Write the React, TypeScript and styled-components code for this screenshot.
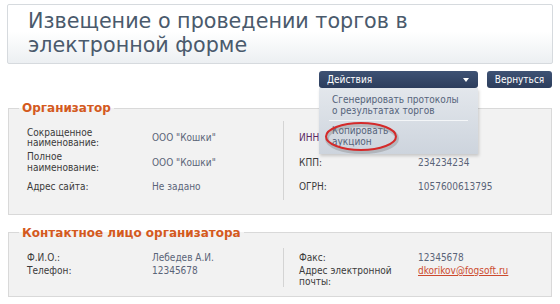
import React from "react";
import styled, {createGlobalStyle} from "styled-components";

const GlobalStyle = createGlobalStyle`
	html, body {
		margin: 0;
		padding: 0;
		background: #ffffff;
	}
	body {
		font-family: "DejaVu Sans Condensed", "DejaVu Sans", Verdana, sans-serif;
		font-size: 10px;
		color: #333333;
	}
`;

type Row = {label: string; value: string; labelColor?: string; link?: boolean};

const orgLeft: Row[] = [
	{label: "Сокращенное наименование:", value: 'ООО "Кошки"'},
	{label: "Полное наименование:", value: 'ООО "Кошки"'},
	{label: "Адрес сайта:", value: "Не задано"},
];

const orgRight: Row[] = [
	{label: "ИНН", value: "", labelColor: "#5b2a63"},
	{label: "КПП:", value: "234234234"},
	{label: "ОГРН:", value: "1057600613795"},
];

const contactLeft: Row[] = [
	{label: "Ф.И.О.:", value: "Лебедев А.И."},
	{label: "Телефон:", value: "12345678"},
];

const contactRight: Row[] = [
	{label: "Факс:", value: "12345678"},
	{label: "Адрес электронной почты:", value: "dkorikov@fogsoft.ru", link: true},
];

const InfoColumn = ({rows, tall, labelWidth, divided}: {rows: Row[]; tall?: boolean; labelWidth: number; divided?: boolean}) => (
	<Column $divided={divided} $tall={tall}>
		{rows.map((r) => (
			<InfoRow key={r.label} $tall={tall} $labelWidth={labelWidth}>
				<Label $color={r.labelColor}>{r.label}</Label>
				{r.link ? <Link href="#">{r.value}</Link> : <Value>{r.value}</Value>}
			</InfoRow>
		))}
	</Column>
);

export default function App() {
	return (
		<>
			<GlobalStyle/>
			<Page>
				<TitleBox>
					<Title>Извещение о проведении торгов в электронной форме</Title>
				</TitleBox>

				<Toolbar>
					<DropWrap>
						<DarkButton $wide>
							<span>Действия</span>
							<Caret/>
						</DarkButton>
						<Menu>
							<MenuItem $width={132}>Сгенерировать протоколы о результатах торгов</MenuItem>
							<MenuSeparator/>
							<MenuItem $width={66}>Копировать аукцион</MenuItem>
							<Highlight width="78" height="34" viewBox="0 0 78 34">
								<ellipse cx="38" cy="17.5" rx="35" ry="13.5" fill="none" stroke="#7c7c7c" strokeOpacity="0.35" strokeWidth="4"/>
								<ellipse cx="37" cy="15.5" rx="35" ry="13.5" fill="none" stroke="#d42a2a" strokeWidth="2"/>
							</Highlight>
						</Menu>
					</DropWrap>
					<DarkButton>Вернуться</DarkButton>
				</Toolbar>

				<Fieldset>
					<Legend>Организатор</Legend>
					<Columns>
						<InfoColumn rows={orgLeft} tall labelWidth={125}/>
						<InfoColumn rows={orgRight} tall labelWidth={119} divided/>
					</Columns>
				</Fieldset>

				<Fieldset $second>
					<Legend>Контактное лицо организатора</Legend>
					<Columns>
						<InfoColumn rows={contactLeft} labelWidth={125}/>
						<InfoColumn rows={contactRight} labelWidth={119} divided/>
					</Columns>
				</Fieldset>
			</Page>
		</>
	);
}

const Page = styled.div`
	width: 546px;
	padding: 4px 0 0 7px;
`;

const TitleBox = styled.div`
	box-sizing: border-box;
	height: 60px;
	border: 1px solid #d6dade;
	border-radius: 2px;
	background: linear-gradient(to bottom, #ffffff 0%, #ffffff 45%, #eceff2 100%);
	padding: 4px 0 0 20px;
`;

const Title = styled.h1`
	margin: 0;
	font-family: "DejaVu Sans", Verdana, sans-serif;
	font-weight: normal;
	font-size: 20.7px;
	line-height: 24px;
	color: #4a5a6c;
	width: 420px;
`;

const Toolbar = styled.div`
	display: flex;
	justify-content: flex-end;
	gap: 9px;
	margin-top: 7px;
	padding-right: 1px;
`;

const DropWrap = styled.div`
	position: relative;
`;

const DarkButton = styled.div<{$wide?: boolean}>`
	display: flex;
	align-items: center;
	justify-content: ${(p) => (p.$wide ? "space-between" : "center")};
	box-sizing: border-box;
	width: ${(p) => (p.$wide ? "159px" : "65px")};
	height: 17px;
	padding: 0 ${(p) => (p.$wide ? "8px" : "0")};
	border-radius: 3px;
	background: linear-gradient(to bottom, #3e5274 0%, #2c3d5c 100%);
	color: #ffffff;
	font-size: 10px;
`;

const Caret = styled.span`
	width: 0;
	height: 0;
	border-left: 3.5px solid transparent;
	border-right: 3.5px solid transparent;
	border-top: 4px solid #ffffff;
	margin-right: 1px;
`;

const Menu = styled.div`
	position: absolute;
	top: 17px;
	left: 0;
	z-index: 2;
	box-sizing: border-box;
	width: 159px;
	height: 66px;
	padding: 7px 10px 0 13px;
	background: linear-gradient(to bottom, #e3e7ec 0%, #cdd4dd 100%);
	box-shadow: 1px 2px 3px rgba(0, 0, 0, 0.18);
	color: #55637a;
`;

const MenuItem = styled.div<{$width: number}>`
	font-size: 10px;
	line-height: 10.5px;
	width: ${(p) => p.$width}px;
`;

const MenuSeparator = styled.div`
	height: 1px;
	margin: 4px 0 5px -3px;
	background: #f4f6f8;
`;

const Highlight = styled.svg`
	position: absolute;
	left: 5px;
	top: 33px;
`;

const Fieldset = styled.fieldset<{$second?: boolean}>`
	margin: ${(p) => (p.$second ? "11px" : "13px")} 0 0 1px;
	padding: 0;
	border: 1px solid #d9d9d9;
	background: #f2f2f2;
	min-inline-size: 0;
	width: 544px;
	box-sizing: border-box;
`;

const Legend = styled.legend`
	margin-left: 10px;
	padding: 0 3px;
	font-family: "DejaVu Sans", Verdana, sans-serif;
	font-size: 12px;
	font-weight: bold;
	line-height: 14px;
	color: #d45a1e;
`;

const Columns = styled.div`
	display: grid;
	grid-template-columns: 274px 1fr;
`;

const Column = styled.div<{$divided?: boolean; $tall?: boolean}>`
	display: flex;
	flex-direction: column;
	gap: ${(p) => (p.$tall ? "0" : "3px")};
	margin: ${(p) => (p.$tall ? "6px 0 14px" : "8px 0 9px")};
	padding: ${(p) => (p.$tall ? "5px" : "5px")} 0 0 ${(p) => (p.$divided ? "15px" : "18px")};
	border-left: ${(p) => (p.$divided ? "1px solid #d4d4d4" : "none")};
`;

const InfoRow = styled.div<{$tall?: boolean; $labelWidth: number}>`
	display: grid;
	grid-template-columns: ${(p) => p.$labelWidth}px 1fr;
	align-items: ${(p) => (p.$tall ? "center" : "start")};
	min-height: ${(p) => (p.$tall ? "24.5px" : "0")};
	font-size: 10px;
	line-height: 10.5px;
`;

const Label = styled.div<{$color?: string}>`
	color: ${(p) => p.$color || "#3a3a3a"};
	max-width: 98px;
`;

const Value = styled.div`
	color: #5a6478;
`;

const Link = styled.a`
	color: #cc4a2e;
	text-decoration: underline;
`;
